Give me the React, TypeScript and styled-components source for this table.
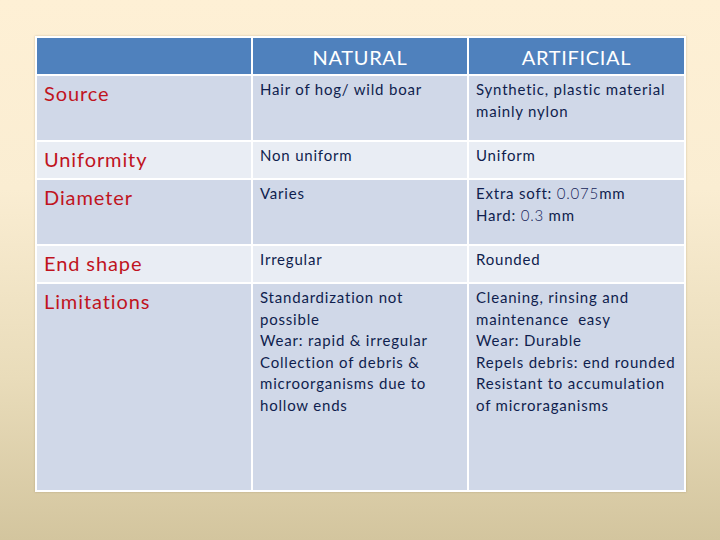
import React from "react";
import styled, { createGlobalStyle } from "styled-components";

const GlobalStyle = createGlobalStyle`
  html, body {
    margin: 0;
    padding: 0;
  }
  body {
    width: 720px;
    height: 540px;
    overflow: hidden;
    font-family: Lato, "Open Sans", "Liberation Sans", sans-serif;
  }
`;

const Slide = styled.div`
  width: 720px;
  height: 540px;
  box-sizing: border-box;
  padding: 36px 0 0 35px;
  background: linear-gradient(180deg, #fef0d5 0%, #faedd2 35%, #e9dcba 70%, #d3c59e 100%);
`;

const Table = styled.div<{ $rows: number[] }>`
  display: grid;
  grid-template-columns: 214px 214px 215px;
  grid-template-rows: 36px ${(p) => p.$rows.map((h) => `${h}px`).join(" ")};
  gap: 2px;
  padding: 2px;
  width: fit-content;
  background: #ffffff;
  box-shadow: 0 0 2px rgba(120, 100, 60, 0.35);
`;

const HeadCell = styled.div`
  background: #4f81bd;
  color: #ffffff;
  font-size: 20px;
  letter-spacing: 0.7px;
  display: flex;
  align-items: center;
  justify-content: center;
  padding-top: 2px;
  box-sizing: border-box;
`;

const LabelCell = styled.div<{ $alt: boolean }>`
  background: ${(p) => (p.$alt ? "#e9edf4" : "#d0d8e8")};
  color: #c0141e;
  font-size: 20px;
  letter-spacing: 0.9px;
  line-height: 24px;
  padding: 5px 0 0 7px;
  box-sizing: border-box;
`;

const DataCell = styled.div<{ $alt: boolean }>`
  background: ${(p) => (p.$alt ? "#e9edf4" : "#d0d8e8")};
  color: #0f1e4e;
  font-size: 15px;
  letter-spacing: 0.8px;
  line-height: 21.6px;
  padding: 3px 0 0 7px;
  box-sizing: border-box;
  white-space: nowrap;
`;

const Num = styled.span`
  color: #16255a;
  font-weight: 300;
`;

type Row = {
  label: string;
  natural: React.ReactNode;
  artificial: React.ReactNode;
  height: number;
};

const rows: Row[] = [
  {
    label: "Source",
    natural: "Hair of hog/ wild boar",
    artificial: (
      <>
        Synthetic, plastic material
        <br />
        mainly nylon
      </>
    ),
    height: 64,
  },
  { label: "Uniformity", natural: "Non uniform", artificial: "Uniform", height: 36 },
  {
    label: "Diameter",
    natural: "Varies",
    artificial: (
      <>
        Extra soft: <Num>0.075</Num>mm
        <br />
        Hard: <Num>0.3</Num> mm
      </>
    ),
    height: 64,
  },
  { label: "End shape", natural: "Irregular", artificial: "Rounded", height: 36 },
  {
    label: "Limitations",
    natural: (
      <>
        Standardization not
        <br />
        possible
        <br />
        Wear: rapid &amp; irregular
        <br />
        Collection of debris &amp;
        <br />
        microorganisms due to
        <br />
        hollow ends
      </>
    ),
    artificial: (
      <>
        Cleaning, rinsing and
        <br />
        maintenance&nbsp; easy
        <br />
        Wear: Durable
        <br />
        Repels debris: end rounded
        <br />
        Resistant to accumulation
        <br />
        of microraganisms
      </>
    ),
    height: 206,
  },
];

export default function App() {
  return (
    <>
      <GlobalStyle />
      <Slide>
        <Table $rows={rows.map((r) => r.height)}>
          <HeadCell />
          <HeadCell>NATURAL</HeadCell>
          <HeadCell>ARTIFICIAL</HeadCell>
          {rows.map((r, i) => (
            <React.Fragment key={r.label}>
              <LabelCell $alt={i % 2 === 1}>{r.label}</LabelCell>
              <DataCell $alt={i % 2 === 1}>{r.natural}</DataCell>
              <DataCell $alt={i % 2 === 1}>{r.artificial}</DataCell>
            </React.Fragment>
          ))}
        </Table>
      </Slide>
    </>
  );
}
